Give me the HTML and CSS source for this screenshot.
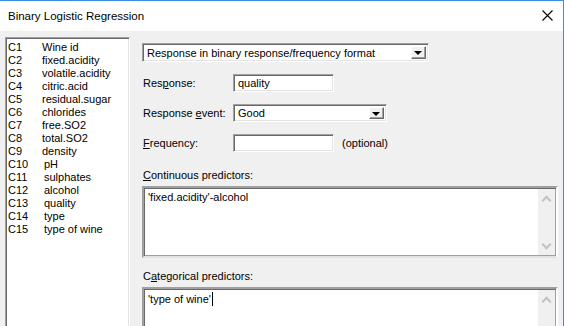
FILE: index.html
```html
<!DOCTYPE html>
<html lang="en">
<head>
  <meta charset="UTF-8" />
  <title>Binary Logistic Regression</title>
  <link rel="stylesheet" href="styles.css">
</head>
<body>
  <div class="window">

    <!-- Title bar -->
    <div class="titlebar">
      <span class="title">Binary Logistic Regression</span>
      <svg class="close" width="11" height="11" viewBox="0 0 11 11">
        <path d="M0.5 0.5 L10.5 10.5 M10.5 0.5 L0.5 10.5" stroke="#000" stroke-width="1.1" fill="none" />
      </svg>
    </div>

    <div class="content">
      <!-- Column list -->
      <div class="listbox sunken">
        <div class="row"><span class="cid">C1</span>Wine id</div>
        <div class="row"><span class="cid">C2</span>fixed.acidity</div>
        <div class="row"><span class="cid">C3</span>volatile.acidity</div>
        <div class="row"><span class="cid">C4</span>citric.acid</div>
        <div class="row"><span class="cid">C5</span>residual.sugar</div>
        <div class="row"><span class="cid">C6</span>chlorides</div>
        <div class="row"><span class="cid">C7</span>free.SO2</div>
        <div class="row"><span class="cid">C8</span>total.SO2</div>
        <div class="row"><span class="cid">C9</span>density</div>
        <div class="row"><span class="cid wide">C10</span>pH</div>
        <div class="row"><span class="cid wide">C11</span>sulphates</div>
        <div class="row"><span class="cid wide">C12</span>alcohol</div>
        <div class="row"><span class="cid wide">C13</span>quality</div>
        <div class="row"><span class="cid wide">C14</span>type</div>
        <div class="row"><span class="cid wide">C15</span>type of wine</div>
      </div>

      <!-- Options -->
      <div class="options">
        <div class="combo format sunken">
          <span class="combo-text">Response in binary response/frequency format</span>
          <span class="arrow-btn"><span class="tri"></span></span>
        </div>

        <div class="field">
          <label>Res<u>p</u>onse:</label>
          <div class="textbox sunken">quality</div>
        </div>

        <div class="field">
          <label>Response <u>e</u>vent:</label>
          <div class="combo event sunken">
            <span class="combo-text">Good</span>
            <span class="arrow-btn"><span class="tri"></span></span>
          </div>
        </div>

        <div class="field">
          <label><u>F</u>requency:</label>
          <div class="textbox sunken"></div>
          <span class="note">(optional)</span>
        </div>

        <div class="caption first"><u>C</u>ontinuous predictors:</div>
        <div class="textarea sunken continuous">
          <div class="text">'fixed.acidity'-alcohol</div>
          <div class="scrollbar">
            <span class="chev up"></span>
            <span class="chev down"></span>
          </div>
        </div>

        <div class="caption">C<u>a</u>tegorical predictors:</div>
        <div class="textarea sunken categorical">
          <div class="text">'type of wine'<span class="caret"></span></div>
          <div class="scrollbar">
            <span class="chev up"></span>
          </div>
        </div>
      </div>
    </div>
  </div>
</body>
</html>
```

FILE: styles.css
```css
body {
  margin: 0;
  font-family: "Liberation Sans", Arial, sans-serif;
  font-size: 11px;
  color: #000;
}

.window {
  width: 563px;
  height: 325px;
  border-top: 1px solid #3a8ee6;
  border-right: 1px solid #3a8ee6;
  overflow: hidden;
  background: #f0f0f0;
}

.titlebar {
  height: 30px;
  background: #fff;
  display: flex;
  align-items: center;
  justify-content: space-between;
  padding: 0 10px 0 8px;
}

.title {
  font-size: 11.5px;
  color: #000;
  padding-bottom: 1px;
}

.close {
  margin-bottom: 2px;
}

.content {
  display: flex;
  gap: 12px;
  padding: 6px 5px 0 5px;
}

.sunken {
  box-sizing: border-box;
  background: #fff;
  border-top: 1px solid #a0a0a0;
  border-left: 1px solid #a0a0a0;
  border-right: 1px solid #fff;
  border-bottom: 1px solid #fff;
  box-shadow: inset 1px 1px 0 #696969, inset -1px -1px 0 #e3e3e3;
}

.listbox {
  width: 125px;
  height: 300px;
  flex-shrink: 0;
  padding: 3px 0 0 2px;
}

.row {
  height: 13px;
  line-height: 13px;
  white-space: nowrap;
}

.cid {
  display: inline-block;
  width: 34px;
}

.cid.wide {
  width: 36px;
}

.options {
  flex: 1;
  padding-top: 6px;
}

.combo {
  display: flex;
  align-items: center;
  height: 19px;
  padding: 2px;
}

.combo.format {
  width: 287px;
}

.combo.event {
  width: 154px;
  height: 18px;
}

.combo-text {
  flex: 1;
  padding-left: 2px;
  white-space: nowrap;
}

.arrow-btn {
  width: 15px;
  height: 100%;
  box-sizing: border-box;
  background: #f0f0f0;
  border-top: 1px solid #fff;
  border-left: 1px solid #fff;
  border-right: 1px solid #696969;
  border-bottom: 1px solid #696969;
  box-shadow: inset -1px -1px 0 #a0a0a0;
  display: flex;
  align-items: center;
  justify-content: center;
}

.tri {
  width: 0;
  height: 0;
  border-left: 4px solid transparent;
  border-right: 4px solid transparent;
  border-top: 4px solid #000;
  margin: 1px 1px 0 0;
}

.field {
  display: flex;
  align-items: center;
  margin-top: 12px;
  height: 18px;
}

.field label {
  width: 90px;
  padding-left: 1px;
}

.textbox {
  width: 101px;
  height: 18px;
  padding: 0 4px;
  line-height: 16px;
}

.note {
  margin-left: 8px;
}

.caption {
  margin-top: 12px;
  height: 13px;
  line-height: 13px;
  padding-left: 1px;
}

.caption.first {
  margin-top: 17px;
}

.textarea {
  display: flex;
  margin-top: 4px;
  border-width: 2px;
  border-top-color: #a0a0a0;
  border-left-color: #a0a0a0;
  border-right-color: #fff;
  border-bottom-color: #e3e3e3;
  box-shadow: inset 1px 1px 0 #696969, inset -1px -1px 0 #a0a0a0;
}

.textarea.continuous {
  height: 72px;
}

.textarea.categorical {
  height: 60px;
}

.textarea .text {
  flex: 1;
  padding: 3px 0 0 4px;
  line-height: 13px;
}

.caret {
  display: inline-block;
  width: 1px;
  height: 14px;
  background: #000;
  vertical-align: -3px;
  margin-left: 1px;
}

.scrollbar {
  width: 17px;
  margin: 1px 1px 1px 0;
  background: #f0f0f0;
  display: flex;
  flex-direction: column;
  justify-content: space-between;
  align-items: center;
  padding: 6px 0 5px;
  box-sizing: border-box;
}

.chev {
  width: 5px;
  height: 5px;
  border-left: 2px solid #c2c2c2;
  border-top: 2px solid #c2c2c2;
}

.chev.up {
  transform: rotate(45deg);
  margin-top: 2px;
}

.chev.down {
  transform: rotate(225deg);
  margin-bottom: 2px;
}
```
